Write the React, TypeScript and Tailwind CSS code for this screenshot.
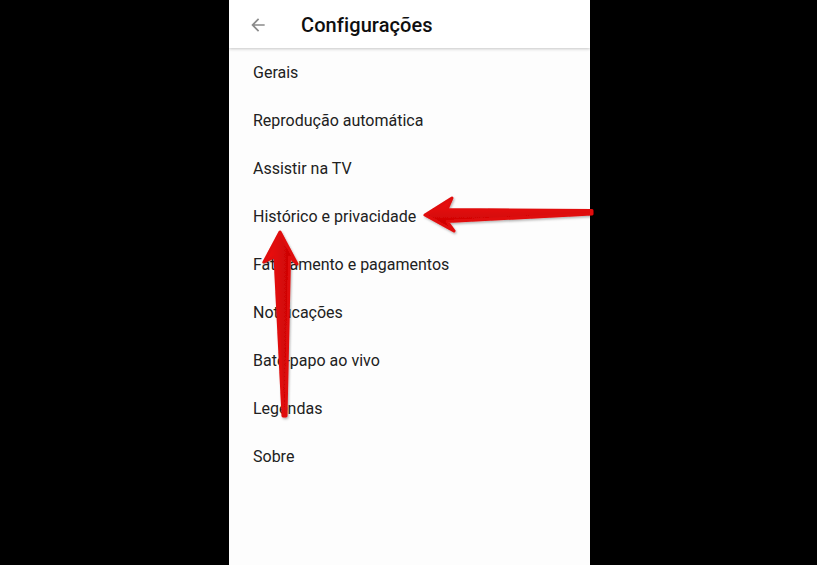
import React from 'react';

const items = [
  'Gerais',
  'Reprodução automática',
  'Assistir na TV',
  'Histórico e privacidade',
  'Faturamento e pagamentos',
  'Notificações',
  'Bate-papo ao vivo',
  'Legendas',
  'Sobre',
];

const Arrows: React.FC = () => (
  <svg className="absolute inset-0 pointer-events-none" width="817" height="565" viewBox="0 0 817 565">
    <defs>
      <linearGradient id="hg" x1="0" y1="0" x2="0" y2="1">
        <stop offset="0" stopColor="#f01010" />
        <stop offset="1" stopColor="#c40000" />
      </linearGradient>
      <linearGradient id="vg" x1="0" y1="0" x2="1" y2="0">
        <stop offset="0" stopColor="#f21212" />
        <stop offset="1" stopColor="#c00000" />
      </linearGradient>
      <filter id="sh" x="-20%" y="-20%" width="140%" height="140%">
        <feDropShadow dx="1" dy="1.5" stdDeviation="1.2" floodColor="#000" floodOpacity="0.3" />
      </filter>
    </defs>
    <g filter="url(#sh)">
      <path
        d="M425 215 L452 198 L447 209.5 L592 210.5 L592 214 L447 221.5 L454 231 Z"
        fill="url(#hg)"
        stroke="#e00a0a"
        strokeWidth="3"
        strokeLinejoin="round"
      />
      <path
        d="M280 232 L264 262 L275 256.5 L283 416 L286 416 L289.5 257 L297 264 Z"
        fill="url(#vg)"
        stroke="#e00a0a"
        strokeWidth="3"
        strokeLinejoin="round"
      />
    </g>
  </svg>
);

export default function App() {
  return (
    <div className="relative w-[817px] h-[565px] bg-black overflow-hidden" style={{ fontFamily: 'Roboto, "Noto Sans", sans-serif' }}>
      <div className="ml-[229px] w-[361px] h-full bg-[#fdfdfd] flex flex-col">
        <div className="h-[48px] pt-[2px] bg-white flex items-center shadow-[0_1px_3px_rgba(0,0,0,0.22)] relative z-10 shrink-0">
          <div className="w-[72px] flex items-center pl-[19px]">
            <svg width="20" height="20" viewBox="0 0 24 24" fill="#8a8a8a">
              <path d="M20 11H7.83l5.59-5.59L12 4l-8 8 8 8 1.41-1.41L7.83 13H20v-2z" />
            </svg>
          </div>
          <span className="text-[20px] font-medium text-[#0f0f0f] tracking-[0.1px]">Configurações</span>
        </div>
        <ul className="flex flex-col pt-[1px]">
          {items.map((item) => (
            <li key={item} className="h-[48px] flex items-center pl-[24px] text-[16px] text-[#212121]">
              {item}
            </li>
          ))}
        </ul>
      </div>
      <Arrows />
    </div>
  );
}
